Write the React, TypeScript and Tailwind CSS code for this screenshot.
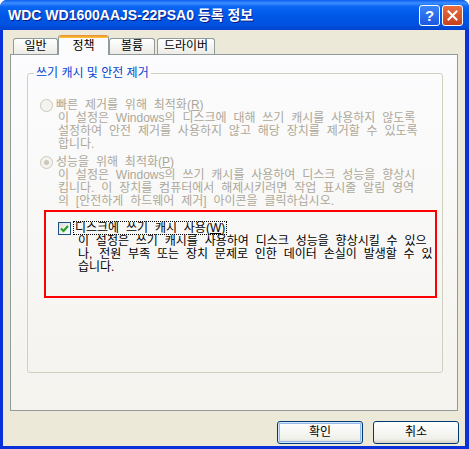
import React from "react";

const font = "font-['Liberation_Sans','Noto_Sans_CJK_KR',sans-serif]";

function Radio({ checked }: { checked?: boolean }) {
  return (
    <span className="w-[13px] h-[13px] shrink-0 rounded-full border border-[#CAC8BB] bg-[#F4F3EE] flex items-center justify-center">
      {checked && <span className="w-[5px] h-[5px] rounded-full bg-[#CAC8BB]" />}
    </span>
  );
}

function Tab({ label, active, width }: { label: string; active?: boolean; width: string }) {
  if (active) {
    return (
      <div className={`${width} h-[20px] -mb-px relative z-10 flex flex-col border-x border-[#919B9C] bg-[#FCFCFE] rounded-t-[3px] overflow-hidden`}>
        <div className="h-[3px] shrink-0 bg-[linear-gradient(to_bottom,#E68B2C,#FFC73C)]" />
        <div className="flex-1 flex items-center justify-center text-[12px] leading-[13px] text-black">{label}</div>
      </div>
    );
  }
  return (
    <div className={`${width} h-[16px] flex items-center justify-center border border-b-0 border-[#919B9C] rounded-t-[3px] bg-[linear-gradient(to_bottom,#FFFFFF,#ECEBE6)] text-[12px] leading-[13px] text-black`}>
      {label}
    </div>
  );
}

export default function App() {
  return (
    <div className={`w-[469px] h-[449px] bg-white ${font}`}>
      <div className="w-[469px] h-[449px] flex flex-col bg-[#0831D9] rounded-t-[7px] overflow-hidden">
        {/* title bar */}
        <div className="h-[30px] shrink-0 flex items-center pl-[8px] pr-[6px] bg-[linear-gradient(to_bottom,#0A5DEF_0%,#3D8EFF_10%,#0A66F3_22%,#0058E8_50%,#0053E0_80%,#0043CF_100%)]">
          <span className="flex-1 text-white font-bold text-[14px] leading-[16px] [text-shadow:1px_1px_0_#0A1E8A] whitespace-nowrap">
            WDC WD1600AAJS-22PSA0 등록 정보
          </span>
          <div className="flex gap-[2px]">
            <div className="w-[21px] h-[21px] rounded-[3px] border border-white bg-[linear-gradient(to_bottom,#3C84F8,#1B57E0)] flex items-center justify-center text-white font-bold text-[15px] leading-none">
              ?
            </div>
            <div className="w-[21px] h-[21px] rounded-[3px] border border-white bg-[linear-gradient(to_bottom,#E8703F,#C8401C)] flex items-center justify-center">
              <svg width="11" height="11" viewBox="0 0 11 11">
                <path d="M1.5 1.5 L9.5 9.5 M9.5 1.5 L1.5 9.5" stroke="#fff" strokeWidth="2" strokeLinecap="square" />
              </svg>
            </div>
          </div>
        </div>

        {/* body */}
        <div className="flex-1 ml-[3px] mr-[4px] mb-[3px] bg-[#ECE9D8] flex flex-col">
          <div className="h-[24px] shrink-0 flex items-end pl-[10px]">
            <Tab label="일반" width="w-[45px]" />
            <Tab label="정책" width="w-[51px]" active />
            <Tab label="볼륨" width="w-[46px]" />
            <div className="w-[2px]" />
            <Tab label="드라이버" width="w-[58px]" />
          </div>

          {/* tab panel */}
          <div className="ml-[7px] w-[448px] h-[357px] border border-[#919B9C] bg-[linear-gradient(to_bottom,#FCFCFE,#F4F3EE)] pt-[12px] pl-[16px]">
            <fieldset className="w-[416px] border border-[#D0D0BF] rounded-[3px] p-0 m-0">
              <legend className="ml-[6px] px-[2px] text-[12px] leading-[13px] text-[#0046D5]">쓰기 캐시 및 안전 제거</legend>
              <div className="pl-[12px] pb-[74px] text-[12px] leading-[13px] [word-spacing:3.5px] whitespace-nowrap">
                {/* option 1 */}
                <div className="mt-[19px] flex items-center gap-[3px] text-[#ACA899]">
                  <Radio />
                  <span>빠른 제거를 위해 최적화(<span className="underline">R</span>)</span>
                </div>
                <div className="pl-[18px] text-[#ACA899]">
                  <div>이 설정은 Windows의 디스크에 대해 쓰기 캐시를 사용하지 않도록</div>
                  <div>설정하여 안전 제거를 사용하지 않고 해당 장치를 제거할 수 있도록</div>
                  <div>합니다.</div>
                </div>

                {/* option 2 */}
                <div className="mt-[5px] flex items-center gap-[3px] text-[#ACA899]">
                  <Radio checked />
                  <span>성능을 위해 최적화(<span className="underline">P</span>)</span>
                </div>
                <div className="pl-[18px] text-[#ACA899]">
                  <div>이 설정은 Windows의 쓰기 캐시를 사용하여 디스크 성능을 향상시</div>
                  <div>킵니다. 이 장치를 컴퓨터에서 해제시키려면 작업 표시줄 알림 영역</div>
                  <div>의 [안전하게 하드웨어 제거] 아이콘을 클릭하십시오.</div>
                </div>

                {/* highlighted write cache option */}
                <div className="mt-[2px] ml-[4px] w-[393px] h-[88px] border-2 border-[#FF0000] pt-[9px] pl-[12px] text-black">
                  <div className="flex items-center">
                    <span className="w-[13px] h-[13px] shrink-0 border border-[#1C5180] bg-[linear-gradient(135deg,#DCDCD7,#FFFFFF)] flex items-center justify-center">
                      <svg width="9" height="9" viewBox="0 0 9 9">
                        <path d="M1 4.5 L3.5 7 L8 2" stroke="#21A121" strokeWidth="2" fill="none" />
                      </svg>
                    </span>
                    <span className="ml-[2px] border border-dotted border-black px-px leading-[12px]">
                      디스크에 쓰기 캐시 사용(<span className="underline">W</span>)
                    </span>
                  </div>
                  <div className="pl-[20px]">
                    <div>이 설정은 쓰기 캐시를 사용하여 디스크 성능을 향상시킬 수 있으</div>
                    <div>나, 전원 부족 또는 장치 문제로 인한 데이터 손실이 발생할 수 있</div>
                    <div>습니다.</div>
                  </div>
                </div>
              </div>
            </fieldset>
          </div>

          {/* buttons */}
          <div className="mt-[10px] flex justify-end gap-[10px] pr-[6px]">
            <button className="w-[86px] h-[23px] rounded-[3px] border border-[#003C74] bg-[linear-gradient(to_bottom,#FFFFFF,#F0F0EA_80%,#D6D0C5)] shadow-[inset_0_0_0_1px_#CEE7FF,inset_0_0_0_2px_#98B8EA] text-[12px] leading-[13px] text-black">
              확인
            </button>
            <button className="w-[86px] h-[23px] rounded-[3px] border border-[#003C74] bg-[linear-gradient(to_bottom,#FFFFFF,#F0F0EA_80%,#D6D0C5)] text-[12px] leading-[13px] text-black">
              취소
            </button>
          </div>
        </div>
      </div>
    </div>
  );
}
